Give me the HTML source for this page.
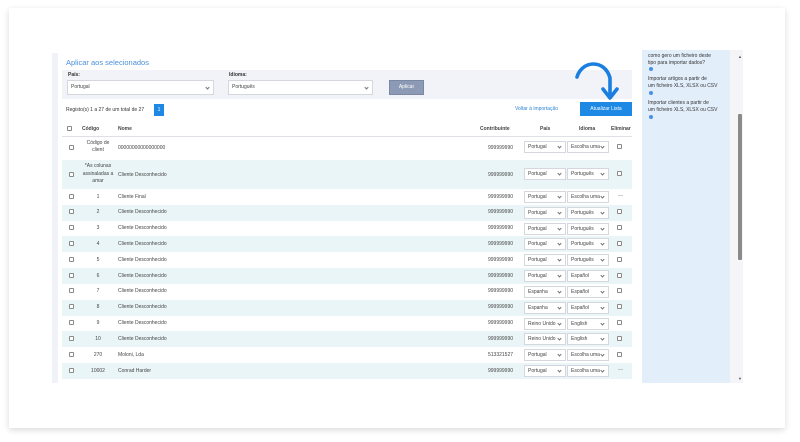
<!DOCTYPE html>
<html><head><meta charset="utf-8"><style>
*{margin:0;padding:0;box-sizing:border-box}
body{width:800px;height:442px;background:#fff;font-family:"Liberation Sans",sans-serif;position:relative;overflow:hidden;color:#333}
.a{position:absolute}
.card{left:9px;top:8px;width:776px;height:420px;background:#fff;box-shadow:0 2px 6px rgba(0,0,0,.15)}
.sel{position:absolute;height:12px;border:1px solid #d4d8de;background:#fff;font-size:5px;line-height:10px;padding-left:3px;color:#444}
.sel:after{content:"";position:absolute;right:4px;top:50%;margin-top:-2px;width:2px;height:2px;border-right:0.6px solid #777;border-bottom:0.6px solid #777;transform:rotate(45deg)}
.cb{position:absolute;width:5px;height:5px;border:0.5px solid #8a8a8a;border-radius:1px;background:#fff}
.t{position:absolute;font-size:5px;color:#444;white-space:nowrap}
</style></head><body>
<div class="a card"></div>
<div class="a" style="left:52px;top:53px;width:6px;height:330px;background:#f1f2f7"></div>
<div class="a" style="left:66px;top:58px;font-size:7.5px;color:#4a90d9">Aplicar aos selecionados</div>
<div class="a" style="left:62px;top:70px;width:570px;height:29px;background:#f1f3f8"></div>
<div class="a" style="left:68px;top:72px;font-size:5px;font-weight:bold">País:</div>
<div class="sel" style="left:67px;top:80px;width:147px;height:15px;line-height:13px">Portugal</div>
<div class="a" style="left:229px;top:72px;font-size:5px;font-weight:bold">Idioma:</div>
<div class="sel" style="left:228px;top:80px;width:145px;height:15px;line-height:13px">Português</div>
<div class="a" style="left:389px;top:80px;width:35px;height:15px;background:#8d9ab5;border:1px solid #7a88a6;color:#fff;font-size:5px;text-align:center;line-height:13px">Aplicar</div>
<div class="a" style="left:66px;top:107px;font-size:5px">Registo(s) 1 a 27 de um total de 27</div>
<div class="a" style="left:154px;top:104px;width:10px;height:12px;background:#1e88e5;color:#fff;font-size:5px;text-align:center;line-height:12px">1</div>
<div class="a" style="left:515px;top:106px;font-size:5px;color:#2f86d6">Voltar à importação</div>
<div class="a" style="left:580px;top:102px;width:52px;height:14px;background:#1e88e5;color:#fff;font-size:5px;text-align:center;line-height:14px">Atualizar Lista</div>
<svg class="a" style="left:560px;top:55px" width="70" height="50"><path d="M17 22 C22 5 45 4 50 23 L50 40" fill="none" stroke="#1a7fe0" stroke-width="3.6" stroke-linecap="round"/><path d="M43 34 L50 43 L57 34" fill="none" stroke="#1a7fe0" stroke-width="3.6" stroke-linecap="round" stroke-linejoin="round"/></svg>
<div class="cb" style="left:67px;top:126px"></div>
<div class="t" style="left:82px;top:126px;font-weight:bold">Código</div>
<div class="t" style="left:118px;top:126px;font-weight:bold">Nome</div>
<div class="t" style="left:480px;top:126px;font-weight:bold">Contribuinte</div>
<div class="t" style="left:540px;top:126px;font-weight:bold">País</div>
<div class="t" style="left:579px;top:126px;font-weight:bold">Idioma</div>
<div class="t" style="left:611px;top:126px;font-weight:bold">Eliminar</div>
<div class="a" style="left:62px;top:136px;width:570px;height:1px;background:#dde1e6"></div>
<div id="rows"></div>
<div class="cb" style="left:69px;top:145px"></div>
<div class="t" style="left:84px;top:140px;width:28px;text-align:center;white-space:normal;line-height:7px">Código de client</div>
<div class="t" style="left:118px;top:145px">00000000000000000</div>
<div class="t" style="left:488px;top:145px">999999990</div>
<div class="sel" style="left:524px;top:141px;width:42px">Portugal</div>
<div class="sel" style="left:567px;top:141px;width:42px">Escolha uma</div>
<div class="cb" style="left:617px;top:144px"></div>
<div class="a" style="left:62px;top:160px;width:570px;height:29px;background:#eaf5f7"></div>
<div class="cb" style="left:69px;top:172px"></div>
<div class="t" style="left:80px;top:163px;width:36px;text-align:center;white-space:normal;line-height:7.5px">*As colunas assinaladas a amar</div>
<div class="t" style="left:118px;top:172px">Cliente Desconhecido</div>
<div class="t" style="left:488px;top:172px">999999990</div>
<div class="sel" style="left:524px;top:168px;width:42px">Portugal</div>
<div class="sel" style="left:567px;top:168px;width:42px">Português</div>
<div class="cb" style="left:617px;top:171px"></div>
<script>
var d=[["1","Cliente Final","999999990","Portugal","Escolha uma",0],["2","Cliente Desconhecido","999999990","Portugal","Português",1],["3","Cliente Desconhecido","999999990","Portugal","Português",1],["4","Cliente Desconhecido","999999990","Portugal","Português",1],["5","Cliente Desconhecido","999999990","Portugal","Português",1],["6","Cliente Desconhecido","999999990","Portugal","Español",1],["7","Cliente Desconhecido","999999990","Espanha","Español",1],["8","Cliente Desconhecido","999999990","Espanha","Español",1],["9","Cliente Desconhecido","999999990","Reino Unido","English",1],["10","Cliente Desconhecido","999999990","Reino Unido","English",1],["270","Moloni, Lda","513321527","Portugal","Escolha uma",1],["10002","Conrad Harder","999999990","Portugal","Escolha uma",0]];
var h="";d.forEach(function(r,i){var y=189+i*15.83;var c=y+8;
if(i%2==1)h+='<div class="a" style="left:62px;top:'+y+'px;width:570px;height:15.9px;background:#eaf5f7"></div>';
h+='<div class="cb" style="left:69px;top:'+(c-3.5)+'px"></div>';
h+='<div class="t" style="left:84px;width:28px;text-align:center;top:'+(c-3.5)+'px">'+r[0]+'</div>';
h+='<div class="t" style="left:118px;top:'+(c-3.5)+'px">'+r[1]+'</div>';
h+='<div class="t" style="left:488px;top:'+(c-3.5)+'px">'+r[2]+'</div>';
h+='<div class="sel" style="left:524px;top:'+(c-6)+'px;width:42px">'+r[3]+'</div>';
h+='<div class="sel" style="left:567px;top:'+(c-6)+'px;width:42px">'+r[4]+'</div>';
h+=r[5]?'<div class="cb" style="left:617px;top:'+(c-3.5)+'px"></div>':'<div class="t" style="left:618px;top:'+(c-4)+'px;color:#888">—</div>';});
document.getElementById("rows").outerHTML=h;
</script>
<div class="a" style="left:52px;top:383px;width:700px;height:45px;background:#fff"></div>
<div class="a" style="left:730px;top:50px;width:13px;height:333px;background:#f5f5f8"></div>
<div class="a" style="left:642px;top:50px;width:88px;height:333px;background:#e3eefb"></div>
<div class="a" style="left:648px;top:53px;font-size:5px;line-height:7px;color:#333;width:80px">como gero um ficheiro deste<br>tipo para importar dados?</div>
<div class="a" style="left:649px;top:67px;width:4px;height:4px;border-radius:50%;background:#4a90e2"></div>
<div class="a" style="left:648px;top:76px;font-size:5px;line-height:7px;color:#333">Importar artigos a partir de<br>um ficheiro XLS, XLSX ou CSV</div>
<div class="a" style="left:649px;top:91px;width:4px;height:4px;border-radius:50%;background:#4a90e2"></div>
<div class="a" style="left:648px;top:100px;font-size:5px;line-height:7px;color:#333">Importar clientes a partir de<br>um ficheiro XLS, XLSX ou CSV</div>
<div class="a" style="left:649px;top:115px;width:4px;height:4px;border-radius:50%;background:#4a90e2"></div>
<div class="a" style="left:738px;top:114px;width:4px;height:146px;background:#8a8a8a;border-radius:1px"></div>
<div class="a" style="left:738px;top:54px;font-size:4px;color:#555">▲</div>
<div class="a" style="left:738px;top:376px;font-size:4px;color:#555">▼</div>
</body></html>
